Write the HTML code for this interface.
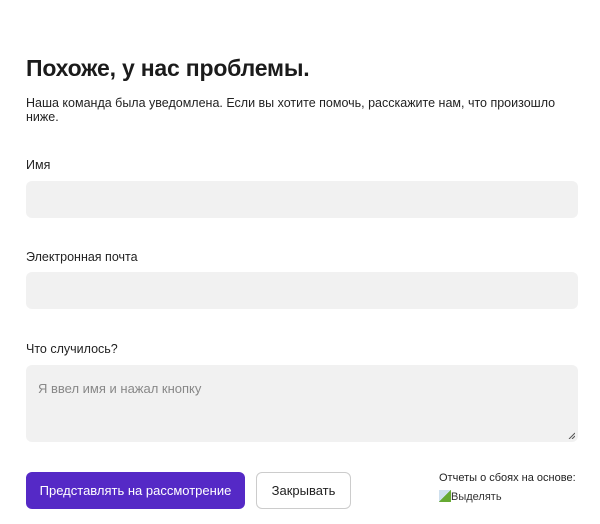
<!DOCTYPE html>
<html><head><meta charset="utf-8"><style>
body{margin:0;width:600px;height:524px;background:#fff;font-family:"Liberation Sans","Noto Sans CJK SC",sans-serif;color:#1b1b1b;position:relative;overflow:hidden}
.a{position:absolute}
h1{position:absolute;left:26px;top:55px;margin:0;font-size:23px;font-weight:bold;letter-spacing:-0.2px}
.p{left:26px;top:96px;font-size:12.5px;line-height:14px;width:560px;color:#222}
.l{left:26px;font-size:12.5px;color:#222}
.i{left:26px;width:552px;background:#f1f1f1;border-radius:6px}
.b{top:472px;height:37px;border-radius:6px;font-size:13px;display:flex;align-items:center;justify-content:center;box-sizing:border-box}
</style></head><body>
<h1>Похоже, у нас проблемы.</h1>
<div class="a p">Наша команда была уведомлена. Если вы хотите помочь, расскажите нам, что произошло ниже.</div>
<div class="a l" style="top:158px">Имя</div>
<div class="a i" style="top:181px;height:37px"></div>
<div class="a l" style="top:250px">Электронная почта</div>
<div class="a i" style="top:272px;height:37px"></div>
<div class="a l" style="top:342px">Что случилось?</div>
<div class="a i" style="top:365px;height:77px"><div style="position:absolute;left:12px;top:16px;font-size:13px;color:#888">Я ввел имя и нажал кнопку</div>
<svg style="position:absolute;right:3px;bottom:3px" width="7" height="7"><path d="M1 7L7 1M4 7L7 4" stroke="#555" stroke-width="1"/></svg></div>
<div class="a b" style="left:26px;width:219px;background:#5529c6;color:#fff">Представлять на рассмотрение</div>
<div class="a b" style="left:256px;width:95px;border:1px solid #ccc;color:#222">Закрывать</div>
<div class="a" style="left:439px;top:472px;font-size:11px;color:#222">Отчеты о сбоях на основе:</div>
<div class="a" style="left:439px;top:490px;font-size:11px;color:#333"><span style="display:inline-block;width:12px;height:12px;background:linear-gradient(135deg,#cfe0ee 50%,#6a3 50%);vertical-align:-2px"></span>Выделять</div>
</body></html>
